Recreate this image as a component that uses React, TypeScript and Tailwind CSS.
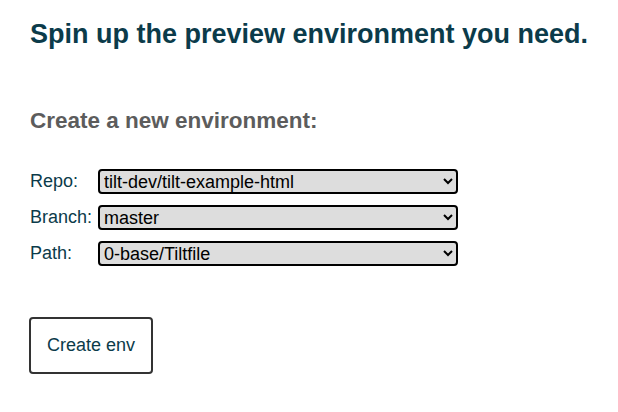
export default function App() {
  return (
    <div className="min-h-screen bg-white px-[30px] pt-[18px] font-['Liberation_Sans',Arial,sans-serif] text-[#0b3b4a]">
      <h1 className="text-[27px] font-bold leading-[32px] whitespace-nowrap">
        Spin up the preview environment you need.
      </h1>

      <h2 className="mt-[58px] text-[22.5px] font-bold leading-[26px] text-[#5c5c5c]">
        Create a new environment:
      </h2>

      <div className="mt-[35px] grid grid-cols-[68px_360px] items-center gap-y-[11px] text-[18px] leading-[25px]">
        <label>Repo:</label>
        <select className="h-[25px] rounded-[4px] border-2 border-black bg-[#dddddd] text-black">
          <option>tilt-dev/tilt-example-html</option>
        </select>
        <label>Branch:</label>
        <select className="h-[25px] rounded-[4px] border-2 border-black bg-[#dddddd] text-black">
          <option>master</option>
        </select>
        <label>Path:</label>
        <select className="h-[25px] rounded-[4px] border-2 border-black bg-[#dddddd] text-black">
          <option>0-base/Tiltfile</option>
        </select>
      </div>

      <button className="-ml-[1px] mt-[51px] h-[57px] w-[124px] rounded-[4px] border-2 border-[#333333] bg-white text-[18px]">
        Create env
      </button>
    </div>
  );
}
